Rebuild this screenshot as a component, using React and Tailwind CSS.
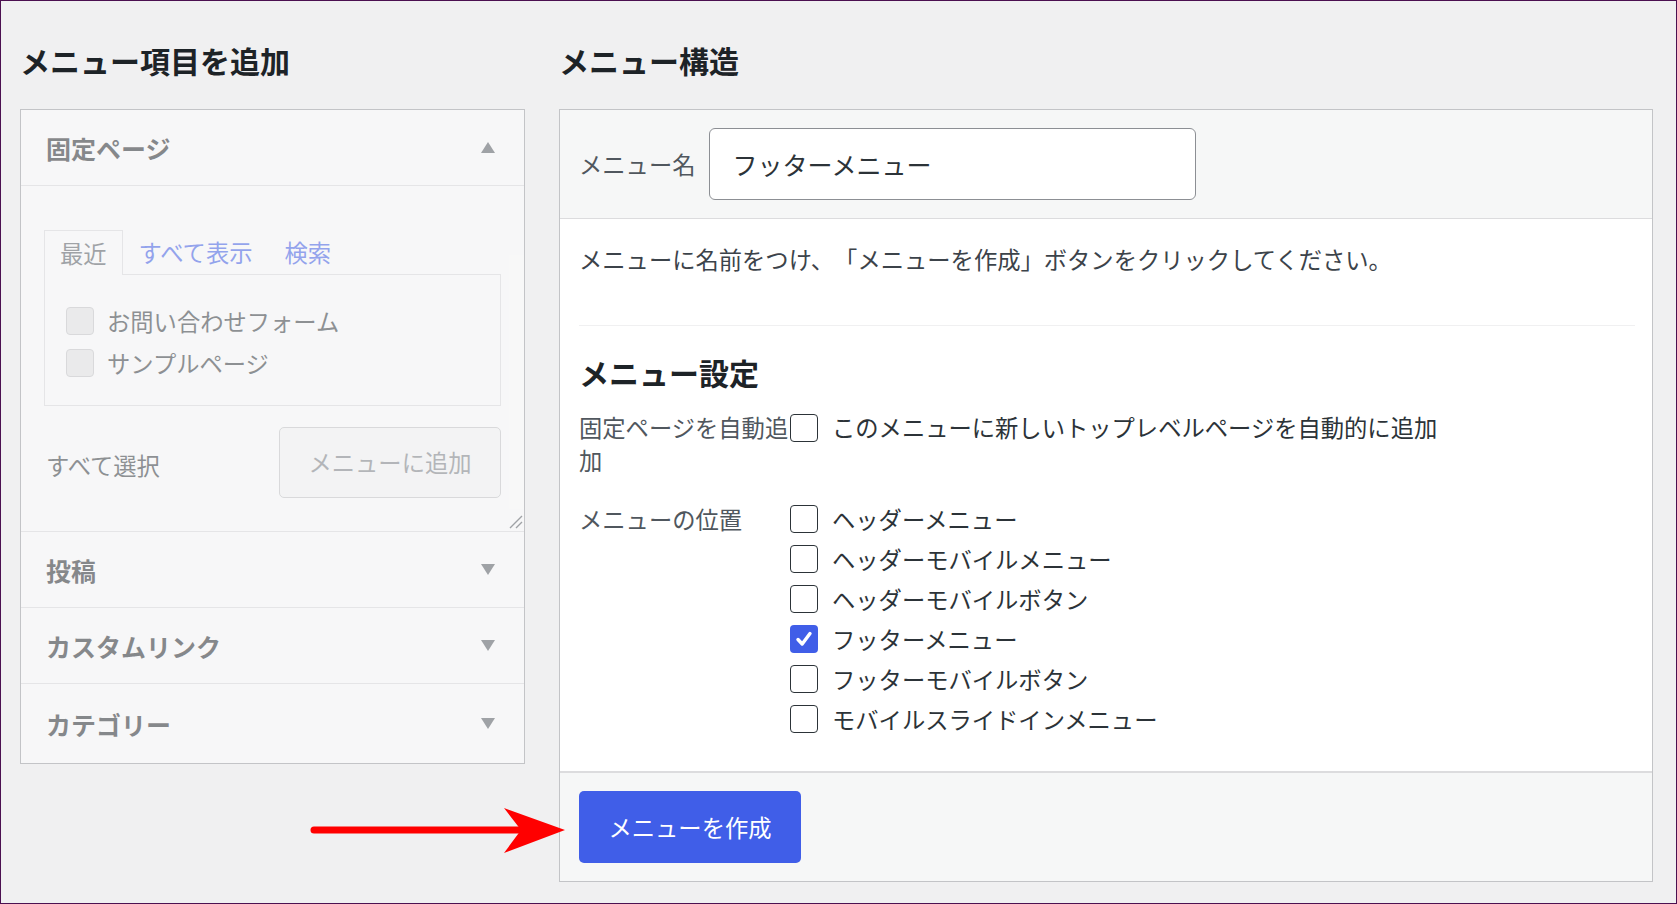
import React from 'react';

const font = "font-['Noto_Sans_CJK_JP','Noto_Sans',sans-serif]";

const Tri = ({ up }) => (
    <svg width="14" height="11" viewBox="0 0 14 11" className="shrink-0">
        <path d={up ? 'M7 0 L14 11 L0 11 Z' : 'M0 0 L14 0 L7 11 Z'} fill="#50575e" />
    </svg>
);

const CheckBox = ({ checked, faded }) => {
    if (faded) {
        return <span className="block w-[28px] h-[28px] shrink-0 rounded-[4px] border border-[#c3c4c7] bg-[#e6e6e7]" />;
    }
    if (checked) {
        return (
            <span className="flex items-center justify-center w-[28px] h-[28px] shrink-0 rounded-[4px] bg-[#405ee8]">
                <svg width="20" height="20" viewBox="0 0 20 20">
                    <path d="M4 10.5 L8.2 15 L16 4.5" fill="none" stroke="#fff" strokeWidth="3.4" strokeLinecap="round" strokeLinejoin="round" />
                </svg>
            </span>
        );
    }
    return <span className="block w-[28px] h-[28px] shrink-0 rounded-[4px] border-[1.5px] border-[#2c3338] bg-white" />;
};

const ClosedSection = ({ title, last }) => (
    <div className={`flex items-center justify-between pl-[25px] pr-[29px] ${last ? 'flex-1' : 'h-[76px] border-b border-[#dcdcde]'}`}>
        <h3 className="text-[25px] leading-[34px] font-bold text-[#1d2327]">{title}</h3>
        <Tri />
    </div>
);

const locations = [
    { label: 'ヘッダーメニュー' },
    { label: 'ヘッダーモバイルメニュー' },
    { label: 'ヘッダーモバイルボタン' },
    { label: 'フッターメニュー', checked: true },
    { label: 'フッターモバイルボタン' },
    { label: 'モバイルスライドインメニュー' },
];

export default function App() {
    return (
        <div className={`relative w-[1677px] h-[904px] overflow-hidden border border-[#4b1050] bg-[#f0f0f1] pl-[19px] pt-[39px] [text-spacing-trim:space-all] ${font}`}>
            <div className="flex gap-[34px] items-start">
                {/* 左: メニュー項目を追加 */}
                <div className="w-[505px] shrink-0">
                    <h2 className="text-[30px] leading-[40px] font-bold text-[#1d2327] mb-[29px]">メニュー項目を追加</h2>
                    <div className="h-[655px] border border-[#c3c4c7]">
                        <div className="opacity-50 bg-white h-full flex flex-col">
                            <div className="h-[76px] border-b border-[#dcdcde] flex items-center justify-between pl-[25px] pr-[29px]">
                                <h3 className="text-[25px] leading-[34px] font-bold text-[#1d2327]">固定ページ</h3>
                                <Tri up />
                            </div>
                            <div className="relative h-[346px] border-b border-[#dcdcde] pt-[44px] px-[23px]">
                                <div className="flex items-end text-[23.3px] leading-[44px]">
                                    <span className="px-[15px] border-t border-x border-[#dcdcde] bg-white text-[#50575e] -mb-px relative z-10">最近</span>
                                    <span className="px-[16px] text-[#3858e9]">すべて表示</span>
                                    <span className="px-[16px] text-[#3858e9]">検索</span>
                                </div>
                                <div className="h-[132px] border border-[#dcdcde] pt-[25px] pl-[21px] text-[23.3px] text-[#2c3338]">
                                    <div className="h-[42px] flex items-center gap-[13px]">
                                        <CheckBox faded />
                                        <span>お問い合わせフォーム</span>
                                    </div>
                                    <div className="h-[42px] flex items-center gap-[13px]">
                                        <CheckBox faded />
                                        <span>サンプルページ</span>
                                    </div>
                                </div>
                                <div className="mt-[21px] flex items-center justify-between pl-[2px]">
                                    <span className="text-[23.3px] leading-[33px] text-[#2c3338] pt-[5px]">すべて選択</span>
                                    <button className="w-[222px] h-[71px] rounded-[5px] border border-[#c3c4c7] bg-[#f6f7f7] text-[23.3px] text-[#787c82]">
                                        メニューに追加
                                    </button>
                                </div>
                                <svg width="14" height="14" viewBox="0 0 14 14" className="absolute right-[1px] bottom-[2px]">
                                    <path d="M1 13 L13 1 M7 13 L13 7" stroke="#50575e" strokeWidth="1.4" />
                                </svg>
                            </div>
                            <ClosedSection title="投稿" />
                            <ClosedSection title="カスタムリンク" />
                            <ClosedSection title="カテゴリー" last />
                        </div>
                    </div>
                </div>

                {/* 右: メニュー構造 */}
                <div className="w-[1094px] shrink-0">
                    <h2 className="text-[30px] leading-[40px] font-bold text-[#1d2327] mb-[29px]">メニュー構造</h2>
                    <div className="border border-[#c3c4c7] bg-white">
                        <div className="bg-[#f6f7f7] border-b border-[#dcdcde] py-[18px] pl-[19px] flex items-center gap-[14px]">
                            <span className="text-[23.3px] text-[#50575e]">メニュー名</span>
                            <input
                                readOnly
                                value="フッターメニュー"
                                className="w-[487px] h-[72px] rounded-[6px] border border-[#8c8f94] bg-white pl-[22px] text-[25px] text-[#2c3338] outline-none"
                            />
                        </div>

                        <div className="pt-[24px] pl-[19px] pr-[17px] pb-[32px] text-[23.3px]">
                            <p className="leading-[33px] text-[#3c434a]">メニューに名前をつけ、「メニューを作成」ボタンをクリックしてください。</p>
                            <div className="mt-[49px] h-px bg-[#f0f0f1]" />
                            <h3 className="mt-[26px] text-[30px] leading-[40px] font-bold text-[#1d2327]">メニュー設定</h3>

                            <div className="mt-[19px] flex items-start">
                                <span className="w-[211px] shrink-0 leading-[33px] text-[#50575e]">固定ページを自動追加</span>
                                <div className="mt-[3px]"><CheckBox /></div>
                                <span className="ml-[14px] leading-[33px] text-[#2c3338]">このメニューに新しいトップレベルページを自動的に追加</span>
                            </div>

                            <div className="mt-[22px] flex items-start">
                                <span className="w-[211px] shrink-0 leading-[40px] text-[#50575e]">メニューの位置</span>
                                <div className="flex flex-col">
                                    {locations.map((loc) => (
                                        <div key={loc.label} className="h-[40px] flex items-center gap-[14px]">
                                            <CheckBox checked={loc.checked} />
                                            <span className="text-[#2c3338]">{loc.label}</span>
                                        </div>
                                    ))}
                                </div>
                            </div>
                        </div>

                        <div className="bg-[#f6f7f7] border-t-2 border-[#dcdcde] py-[18px] pl-[19px]">
                            <button className="w-[222px] h-[72px] rounded-[5px] bg-[#405ee8] text-white text-[23.3px]">
                                メニューを作成
                            </button>
                        </div>
                    </div>
                </div>
            </div>

            {/* 注釈の矢印 */}
            <svg width="270" height="60" viewBox="0 0 270 60" className="absolute left-[300px] top-[800px]">
                <line x1="13" y1="29" x2="222" y2="29" stroke="#ff0000" strokeWidth="7" strokeLinecap="round" />
                <path d="M264 29 L203 7 L220 29 L203 52 Z" fill="#ff0000" />
            </svg>
        </div>
    );
}
